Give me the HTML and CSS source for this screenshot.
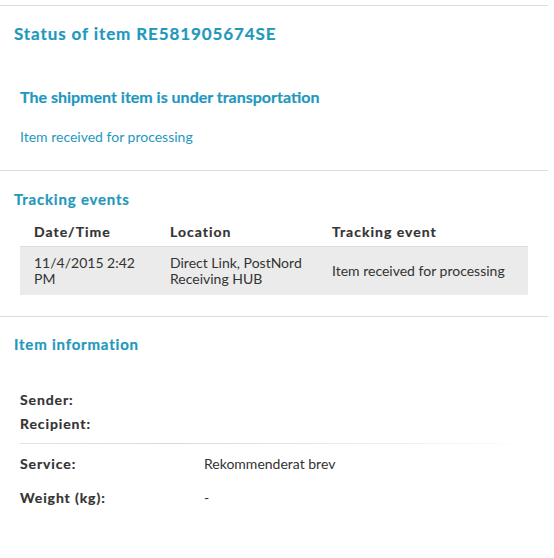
FILE: index.html
```html
<!DOCTYPE html>
<html>
  <head>
    <title>Track item</title>
    <link rel="stylesheet" href="styles.css">
    <meta name="viewport" content="width=device-width, initial-scale=1">
    <meta charset="utf-8">
  </head>
  <body>
    <div id="page">
      <div class="block status-block">
        <h1 class="block-title">Status of item RE581905674SE</h1>
        <h2 class="status-title">The shipment item is under transportation</h2>
        <p class="status-text">Item received for processing</p>
      </div>

      <div class="block events-block">
        <h3 class="block-title small">Tracking events</h3>
        <table class="events">
          <thead>
            <tr>
              <th class="col-date">Date/Time</th>
              <th class="col-loc">Location</th>
              <th>Tracking event</th>
            </tr>
          </thead>
          <tbody>
            <tr>
              <td>11/4/2015 2:42 PM</td>
              <td>Direct Link, PostNord Receiving HUB</td>
              <td>Item received for processing</td>
            </tr>
          </tbody>
        </table>
      </div>

      <div class="block info-block">
        <h3 class="block-title small">Item information</h3>
        <div class="info-group parties">
          <div class="info-row"><span class="label">Sender:</span><span class="value"></span></div>
          <div class="info-row"><span class="label">Recipient:</span><span class="value"></span></div>
        </div>
        <div class="info-group details">
          <div class="info-row"><span class="label">Service:</span><span class="value">Rekommenderat brev</span></div>
          <div class="info-row"><span class="label">Weight (kg):</span><span class="value">-</span></div>
        </div>
      </div>
    </div>
  </body>
</html>
```

FILE: styles.css
```css
body {
  font-family: 'Lato', 'Liberation Sans', sans-serif;
  font-size: 14px;
  color: #333;
  margin: 0;
  padding-top: 5px;
  background: #fff;
}
#page {
  width: 548px;
}
.block {
  border-top: 1px solid #dcdcdc;
}
.block-title {
  color: #1f98bd;
  font-size: 17px;
  line-height: 20px;
  font-weight: bold;
  letter-spacing: 0.9px;
  -webkit-text-stroke: 0.2px;
  margin: 18px 0 0 14px;
}
.block-title.small {
  font-size: 15px;
  line-height: 18px;
  letter-spacing: 0.8px;
}
.status-title {
  color: #1f98bd;
  font-size: 16px;
  line-height: 20px;
  font-weight: bold;
  -webkit-text-stroke: 0.2px;
  margin: 43px 0 0 20px;
}
.status-text {
  color: #1f98bd;
  line-height: 18px;
  margin: 21px 0 24px 20px;
}
.events-block .block-title {
  margin-top: 19px;
}
.events {
  width: 508px;
  margin: 10px 0 21px 20px;
  border-collapse: collapse;
  table-layout: fixed;
}
.events th,
.events td {
  text-align: left;
  padding: 0 14px;
  vertical-align: middle;
  line-height: 16px;
}
.events th {
  height: 28px;
  font-weight: bold;
  letter-spacing: 1px;
  -webkit-text-stroke: 0.2px;
  border-bottom: 1px solid #dcdcdc;
}
.events td {
  background-color: #ebebeb;
  padding-top: 8px;
  padding-bottom: 8px;
}
.events .col-date {
  width: 108px;
}
.events .col-loc {
  width: 134px;
}
.info-block .block-title {
  margin-top: 18px;
}
.info-group {
  margin-left: 20px;
  width: 508px;
}
.parties {
  margin-top: 38px;
  padding-bottom: 10px;
  border-bottom: 1px solid transparent;
  border-image: linear-gradient(to right, #e4e4e4, #dadada 30%, #f4f4f4 85%, rgba(255,255,255,0)) 1;
}
.details {
  margin-top: 11px;
}
.info-row {
  display: grid;
  grid-template-columns: 184px 1fr;
  line-height: 18px;
}
.parties .info-row + .info-row {
  margin-top: 6px;
}
.details .info-row + .info-row {
  margin-top: 16px;
}
.label {
  font-weight: bold;
  letter-spacing: 0.9px;
  -webkit-text-stroke: 0.2px;
}
```
